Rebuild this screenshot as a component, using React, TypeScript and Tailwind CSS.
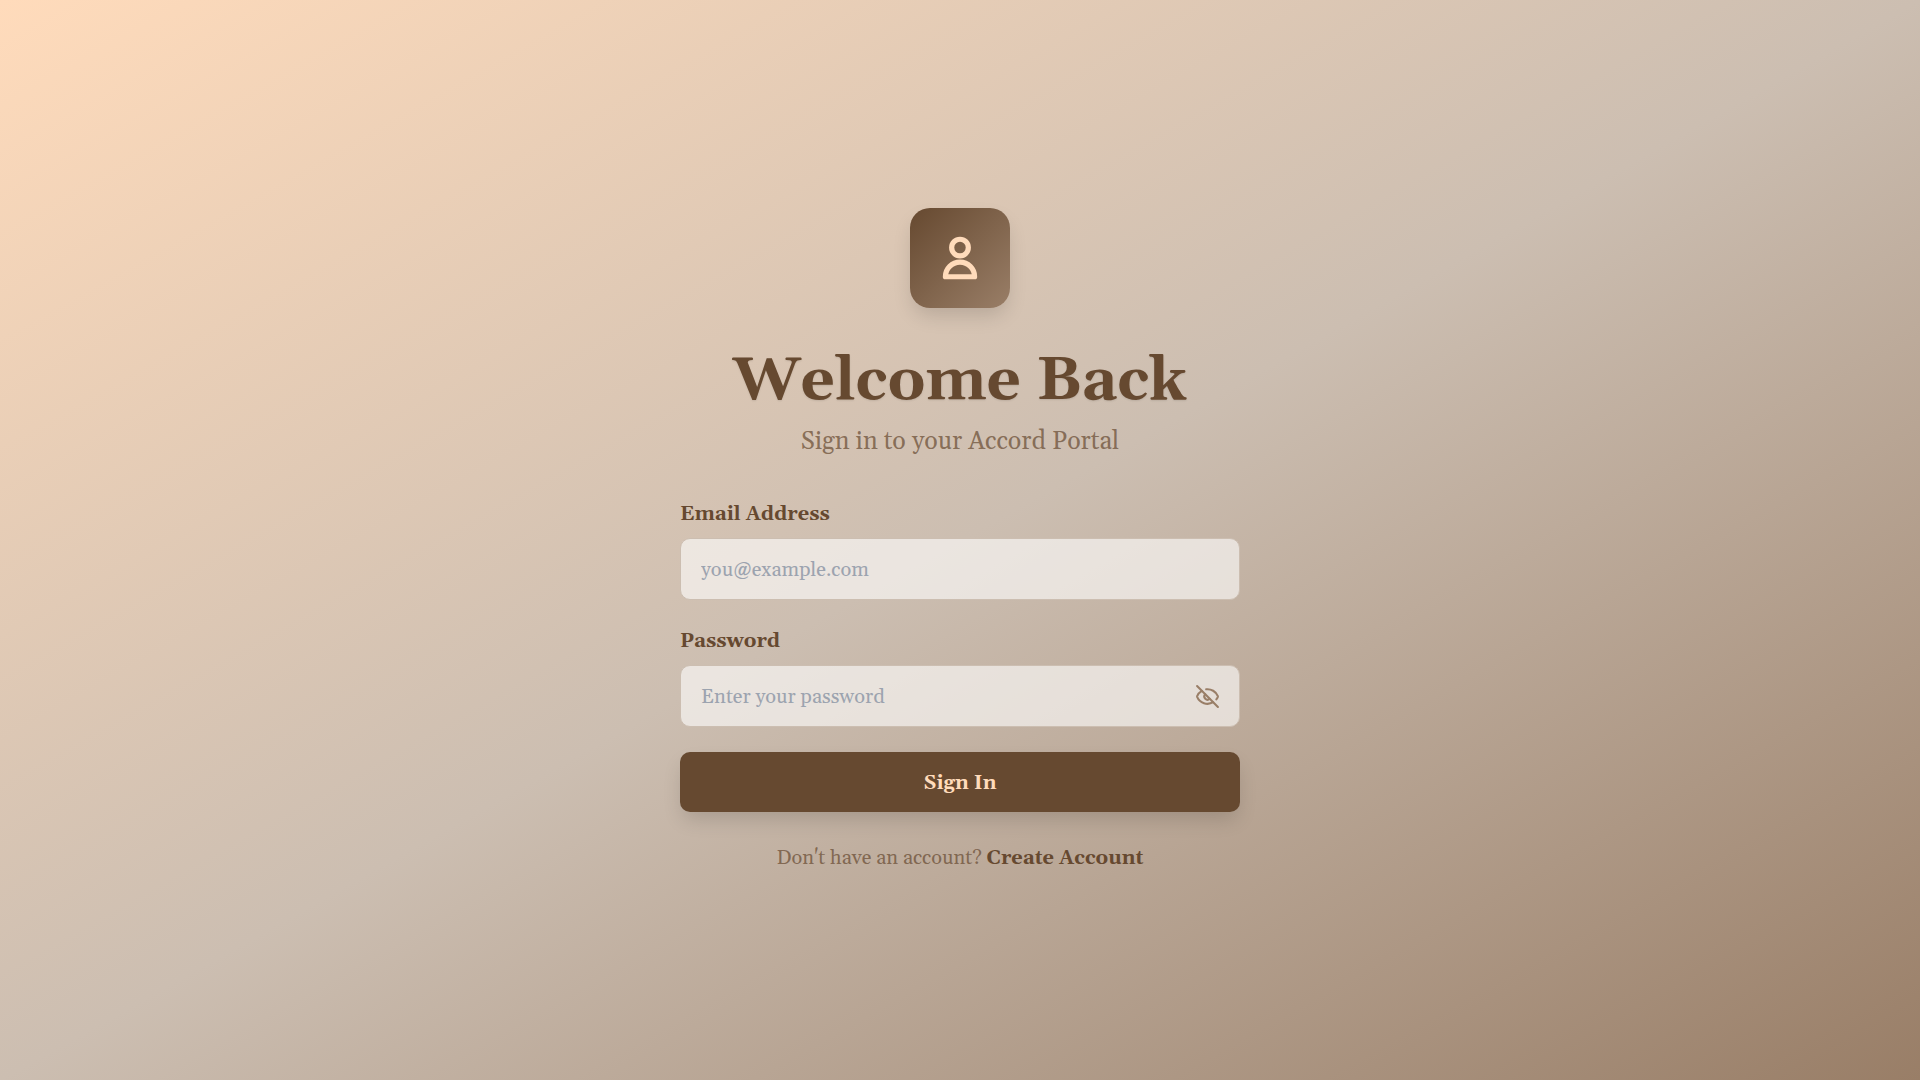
import { useState } from "react";
import { Eye, EyeOff } from "lucide-react";

const field =
  "block w-full rounded-[10px] border border-[#CCBEB1] bg-white/60 pt-[17px] pb-[15px] pl-5 text-xl leading-7 text-[#664930] placeholder:text-[#9ca3af] outline-none focus:border-[#664930]";

export default function App() {
  const [visible, setVisible] = useState(false);

  return (
    <main className="flex min-h-screen items-center justify-center bg-linear-to-br/srgb from-[#FFDBBB] via-[#CCBEB1] to-[#997E67] p-5 font-[Georgia,Gelasio,serif] text-[#664930]">
      <div className="w-full max-w-[560px]">
        <header className="mb-[38px] flex flex-col items-center text-center">
          <div className="mb-10 flex size-[100px] items-center justify-center rounded-[20px] bg-linear-to-br/srgb from-[#664930] to-[#997E67] shadow-[0_10px_20px_-3px_rgba(0,0,0,0.15)]">
            <svg
              className="size-[50px] text-[#FFDBBB]"
              viewBox="0 0 24 24"
              fill="none"
              stroke="currentColor"
              strokeWidth="2.5"
              strokeLinecap="round"
              strokeLinejoin="round"
              aria-hidden="true"
            >
              <path d="M16 7a4 4 0 1 1-8 0 4 4 0 0 1 8 0z" />
              <path d="M12 14a7 7 0 0 0-7 7h14a7 7 0 0 0-7-7z" />
            </svg>
          </div>
          <h1 className="mb-2 text-6xl leading-[68px] font-bold [text-shadow:0_1px_2px_rgba(0,0,0,0.1)]">
            Welcome Back
          </h1>
          <p className="text-[25px] leading-9 text-[#664930]/70">Sign in to your Accord Portal</p>
        </header>

        <form onSubmit={(e) => e.preventDefault()}>
          <div className="mb-[25px]">
            <label htmlFor="email" className="mb-2 block text-xl leading-8 font-bold">
              Email Address
            </label>
            <input
              id="email"
              type="email"
              placeholder="you@example.com"
              className={`${field} pr-5`}
            />
          </div>
          <div className="mb-[25px]">
            <label htmlFor="password" className="mb-2 block text-xl leading-8 font-bold">
              Password
            </label>
            <div className="relative">
              <input
                id="password"
                type={visible ? "text" : "password"}
                placeholder="Enter your password"
                className={`${field} pr-14`}
              />
              <button
                type="button"
                aria-label={visible ? "Hide password" : "Show password"}
                onClick={() => setVisible(!visible)}
                className="absolute inset-y-0 right-5 flex items-center text-[#997E67]"
              >
                {visible ? <Eye size={25} /> : <EyeOff size={25} />}
              </button>
            </div>
          </div>
          <button
            type="submit"
            className="block w-full rounded-[10px] bg-[#664930] pt-[17px] pb-[15px] text-xl leading-7 font-bold text-[#FFDBBB] shadow-[0_10px_20px_-3px_rgba(0,0,0,0.15)]"
          >
            Sign In
          </button>
        </form>

        <p className="mt-8 text-center text-xl leading-7 text-[#664930]/70">
          Don't have an account?{" "}
          <a href="#create-account" className="font-bold text-[#664930]">
            Create Account
          </a>
        </p>
      </div>
    </main>
  );
}
